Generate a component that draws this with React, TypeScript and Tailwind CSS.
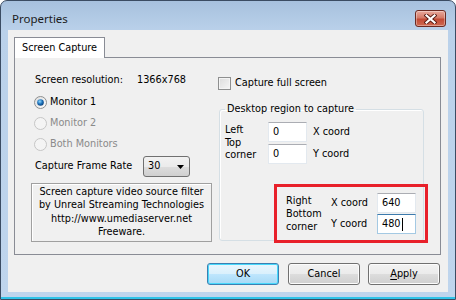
function CloseGlyph() {
  return (
    <svg width="13" height="10" viewBox="0 0 13 10">
      <path d="M2.5 1.5 L10.5 8.5 M10.5 1.5 L2.5 8.5" stroke="#5a1c14" strokeWidth="4" strokeLinecap="square" />
      <path d="M2.5 1.5 L10.5 8.5 M10.5 1.5 L2.5 8.5" stroke="#ffffff" strokeWidth="2.2" strokeLinecap="square" />
    </svg>
  );
}

function Radio({ checked, disabled }: { checked?: boolean; disabled?: boolean }) {
  return (
    <svg width="13" height="13" viewBox="0 0 13 13">
      <defs>
        <linearGradient id="rfill" x1="0" y1="0" x2="1" y2="1">
          <stop offset="0" stopColor="#dcdcdc" />
          <stop offset="1" stopColor="#ffffff" />
        </linearGradient>
        <radialGradient id="rdot" cx="0.4" cy="0.35" r="0.7">
          <stop offset="0" stopColor="#8fd8ff" />
          <stop offset="0.55" stopColor="#1b6fb8" />
          <stop offset="1" stopColor="#0a3e76" />
        </radialGradient>
      </defs>
      <circle cx="6.5" cy="6.5" r="6" fill={disabled ? "#f4f4f4" : "url(#rfill)"} stroke={disabled ? "#c5c5c5" : "#8e8f8f"} />
      {checked && <circle cx="6.5" cy="6.5" r="3.3" fill="url(#rdot)" />}
    </svg>
  );
}

function TextBox({ value, focused, caret }: { value: string; focused?: boolean; caret?: boolean }) {
  return (
    <div
      className={
        focused
          ? "flex h-[20px] w-[39px] items-center border border-[#a4c9e3] border-t-[#3d7bad] bg-white pl-[4px]"
          : "flex h-[20px] w-[39px] items-center border border-[#e3e9ef] border-t-[#abadb3] bg-white pl-[4px]"
      }
    >
      <span>{value}</span>
      {caret && <span className="ml-[1px] h-[13px] w-px bg-black" />}
    </div>
  );
}

function Button({ label, primary, width }: { label: React.ReactNode; primary?: boolean; width: string }) {
  return (
    <div
      className={
        (primary
          ? "border-[#3c7fb1] shadow-[inset_0_0_0_1px_#48d8fb] bg-[linear-gradient(#eaf6fd_0%,#d9f0fc_50%,#bee6fd_51%,#a7d9f5_100%)] "
          : "border-[#707070] shadow-[inset_0_0_0_1px_#fcfcfc] bg-[linear-gradient(#f2f2f2_0%,#ebebeb_50%,#dddddd_51%,#cfcfcf_100%)] ") +
        width +
        " flex h-[22px] items-center justify-center rounded-[3px] border"
      }
    >
      {label}
    </div>
  );
}

export default function App() {
  return (
    <div className="flex h-[300px] w-[456px] flex-col overflow-hidden rounded-t-[7px] border border-[#3b4c63] bg-[linear-gradient(#a7c1de,#bad1ea_30px,#bfd5ed)] font-['DejaVu_Sans_Condensed','Liberation_Sans',sans-serif] text-[10.8px] text-black">
      {/* title bar */}
      <div className="flex h-[29px] items-center pt-[6px] pl-[11px] pr-[9px]">
        <span className="font-['Noto_Sans',sans-serif] text-[11.5px] text-[#1b1b1b]">Properties</span>
        <div className="ml-auto flex h-[17px] w-[31px] items-center justify-center rounded-[3px] border border-[#6b2a22] bg-[linear-gradient(#e9a99c,#d47a68_45%,#c24a35_55%,#cf6a52)] shadow-[inset_0_0_0_1px_rgba(255,255,255,0.35)]">
          <CloseGlyph />
        </div>
      </div>

      {/* client area */}
      <div className="mx-[7px] flex h-[262px] flex-col bg-[#f0f0f0] pt-[7px] pl-[6px] pr-[7px]">
        <div className="relative z-10 -mb-px flex h-[21px] w-[91px] items-center border border-b-0 border-[#898c95] bg-white pl-[7px]">
          Screen Capture
        </div>
        <div className="flex h-[198px] w-[427px] items-start border border-[#898c95] bg-[#f0f0f0]">
          {/* left column */}
          <div className="ml-[16px] flex w-[181px] flex-col">
            <div className="mt-[15px] flex h-[14px] items-center pl-[4px]">
              <span className="w-[102px]">Screen resolution:</span>
              <span>1366x768</span>
            </div>
            <div className="mt-[5px] flex h-[21px] items-center gap-[3px] pl-[3px]">
              <Radio checked />
              <span>Monitor 1</span>
            </div>
            <div className="flex h-[21px] items-center gap-[3px] pl-[3px] text-[#8a8a8a]">
              <Radio disabled />
              <span>Monitor 2</span>
            </div>
            <div className="flex h-[21px] items-center gap-[3px] pl-[3px] text-[#8a8a8a]">
              <Radio disabled />
              <span>Both Monitors</span>
            </div>
            <div className="mt-[1px] flex h-[21px] items-center pl-[4px]">
              <span className="w-[108px]">Capture Frame Rate</span>
              <div className="flex h-[21px] w-[47px] items-center rounded-[3px] border border-[#707070] bg-[linear-gradient(#f2f2f2_0%,#ebebeb_50%,#dddddd_51%,#cfcfcf_100%)] pl-[4px] pr-[5px]">
                <span>30</span>
                <svg className="ml-auto" width="7" height="4" viewBox="0 0 7 4">
                  <path d="M0 0 H7 L3.5 4 Z" fill="#000" />
                </svg>
              </div>
            </div>
            <div className="mt-[6px] flex h-[59px] w-[181px] flex-col items-center border border-[#a0a0a0] pt-[1px] leading-[13.3px] shadow-[inset_1px_1px_0_#ffffff]">
              <span>Screen capture video source filter</span>
              <span>by Unreal Streaming Technologies</span>
              <span>http://www.umediaserver.net</span>
              <span>Freeware.</span>
            </div>
          </div>

          {/* right column */}
          <div className="ml-[6px] flex w-[206px] flex-col">
            <div className="mt-[19px] flex h-[13px] items-center gap-[4px]">
              <div className="h-[13px] w-[13px] border border-[#8e8f8f] bg-[linear-gradient(135deg,#dcdcdc,#f6f6f6)] shadow-[inset_0_0_0_1px_#f4f4f4]" />
              <span>Capture full screen</span>
            </div>
            <fieldset className="ml-[1px] mt-[12px] w-[205px] rounded-[3px] border border-[#d5dfe5] shadow-[inset_1px_1px_0_#ffffff]">
              <legend className="ml-[5px] px-[2px] leading-[14px]">Desktop region to capture</legend>
              <div className="mt-[6px] flex items-center pl-[5px]">
                <div className="flex w-[43px] flex-col leading-[12.5px]">
                  <span>Left</span>
                  <span>Top</span>
                  <span>corner</span>
                </div>
                <div className="flex flex-col gap-[2px]">
                  <TextBox value="0" />
                  <TextBox value="0" />
                </div>
                <div className="ml-[6px] flex flex-col gap-[2px]">
                  <span className="flex h-[20px] items-center">X coord</span>
                  <span className="flex h-[20px] items-center">Y coord</span>
                </div>
              </div>
              <div className="-mr-[5px] mt-[20px] -mb-[3px] flex justify-end">
                <div className="flex h-[59px] w-[154px] items-center border-[3px] border-[#e8202a] pl-[9px]">
                  <div className="flex w-[45px] flex-col leading-[13px]">
                    <span>Right</span>
                    <span>Bottom</span>
                    <span>corner</span>
                  </div>
                  <div className="flex flex-col gap-[1px]">
                    <div className="flex items-center">
                      <span className="w-[46px]">X coord</span>
                      <TextBox value="640" />
                    </div>
                    <div className="flex items-center">
                      <span className="w-[46px]">Y coord</span>
                      <TextBox value="480" focused caret />
                    </div>
                  </div>
                </div>
              </div>
            </fieldset>
          </div>
        </div>

        {/* buttons */}
        <div className="mt-[8px] flex justify-end pr-[1px]">
          <Button label="OK" primary width="w-[72px] mr-[9px]" />
          <Button label="Cancel" width="w-[72px] mr-[8px]" />
          <Button
            label={
              <span>
                <span className="underline underline-offset-2">A</span>pply
              </span>
            }
            width="w-[72px]"
          />
        </div>
      </div>

      {/* bottom frame */}
      <div className="mt-[5px] h-[2px] bg-[#2fc3e8]" />
    </div>
  );
}
